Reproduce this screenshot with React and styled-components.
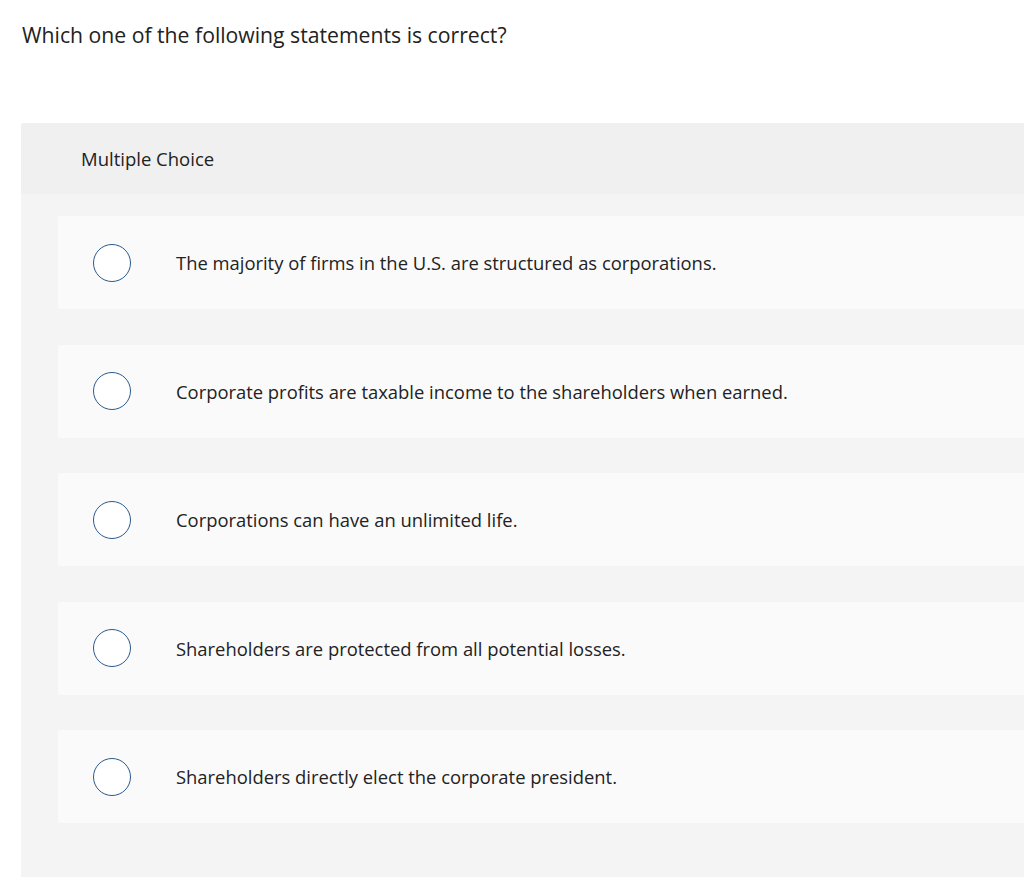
import React from "react"
import styled, { createGlobalStyle } from "styled-components"

const GlobalStyle = createGlobalStyle`
  html, body {
    margin: 0;
    padding: 0;
    background: #ffffff;
  }
  body {
    font-family: "Open Sans", "Liberation Sans", sans-serif;
    color: #222222;
    overflow: hidden;
  }
`

const Page = styled.div`
  width: 1024px;
  height: 887px;
  overflow: hidden;
`

const Question = styled.p`
  margin: 0;
  padding: 23px 0 0 22px;
  height: 123px;
  box-sizing: border-box;
  font-size: 21.2px;
  line-height: 24px;
  color: #222;
`

const Panel = styled.section`
  margin-left: 21px;
  width: 1010px;
  height: 754px;
  background: #f4f4f4;
  border-radius: 3px 0 0 0;
`

const PanelHeader = styled.div`
  height: 71px;
  display: flex;
  align-items: center;
  padding-left: 60px;
  background: #f0f0f0;
  border-radius: 3px 0 0 0;
  font-size: 18.5px;
  color: #222;
`

const Choices = styled.div`
  display: flex;
  flex-direction: column;
  gap: 35.5px;
  padding: 22px 0 0 37px;
`

const Choice = styled.label`
  display: flex;
  align-items: center;
  height: 93px;
  padding-left: 35px;
  background: #fafafa;
  border-radius: 3px 0 0 3px;
  cursor: pointer;
`

const Radio = styled.span`
  flex: none;
  width: 36px;
  height: 36px;
  border: 1.5px solid #2a5a8c;
  border-radius: 50%;
  background: #fff;
`

const ChoiceText = styled.span`
  margin-left: 45px;
  font-size: 18.4px;
  color: #222;
`

const options = [
  "The majority of firms in the U.S. are structured as corporations.",
  "Corporate profits are taxable income to the shareholders when earned.",
  "Corporations can have an unlimited life.",
  "Shareholders are protected from all potential losses.",
  "Shareholders directly elect the corporate president.",
]

export default function App() {
  return (
    <Page>
      <GlobalStyle />
      <Question>Which one of the following statements is correct?</Question>
      <Panel>
        <PanelHeader>Multiple Choice</PanelHeader>
        <Choices>
          {options.map((text) => (
            <Choice key={text}>
              <Radio />
              <ChoiceText>{text}</ChoiceText>
            </Choice>
          ))}
        </Choices>
      </Panel>
    </Page>
  )
}
